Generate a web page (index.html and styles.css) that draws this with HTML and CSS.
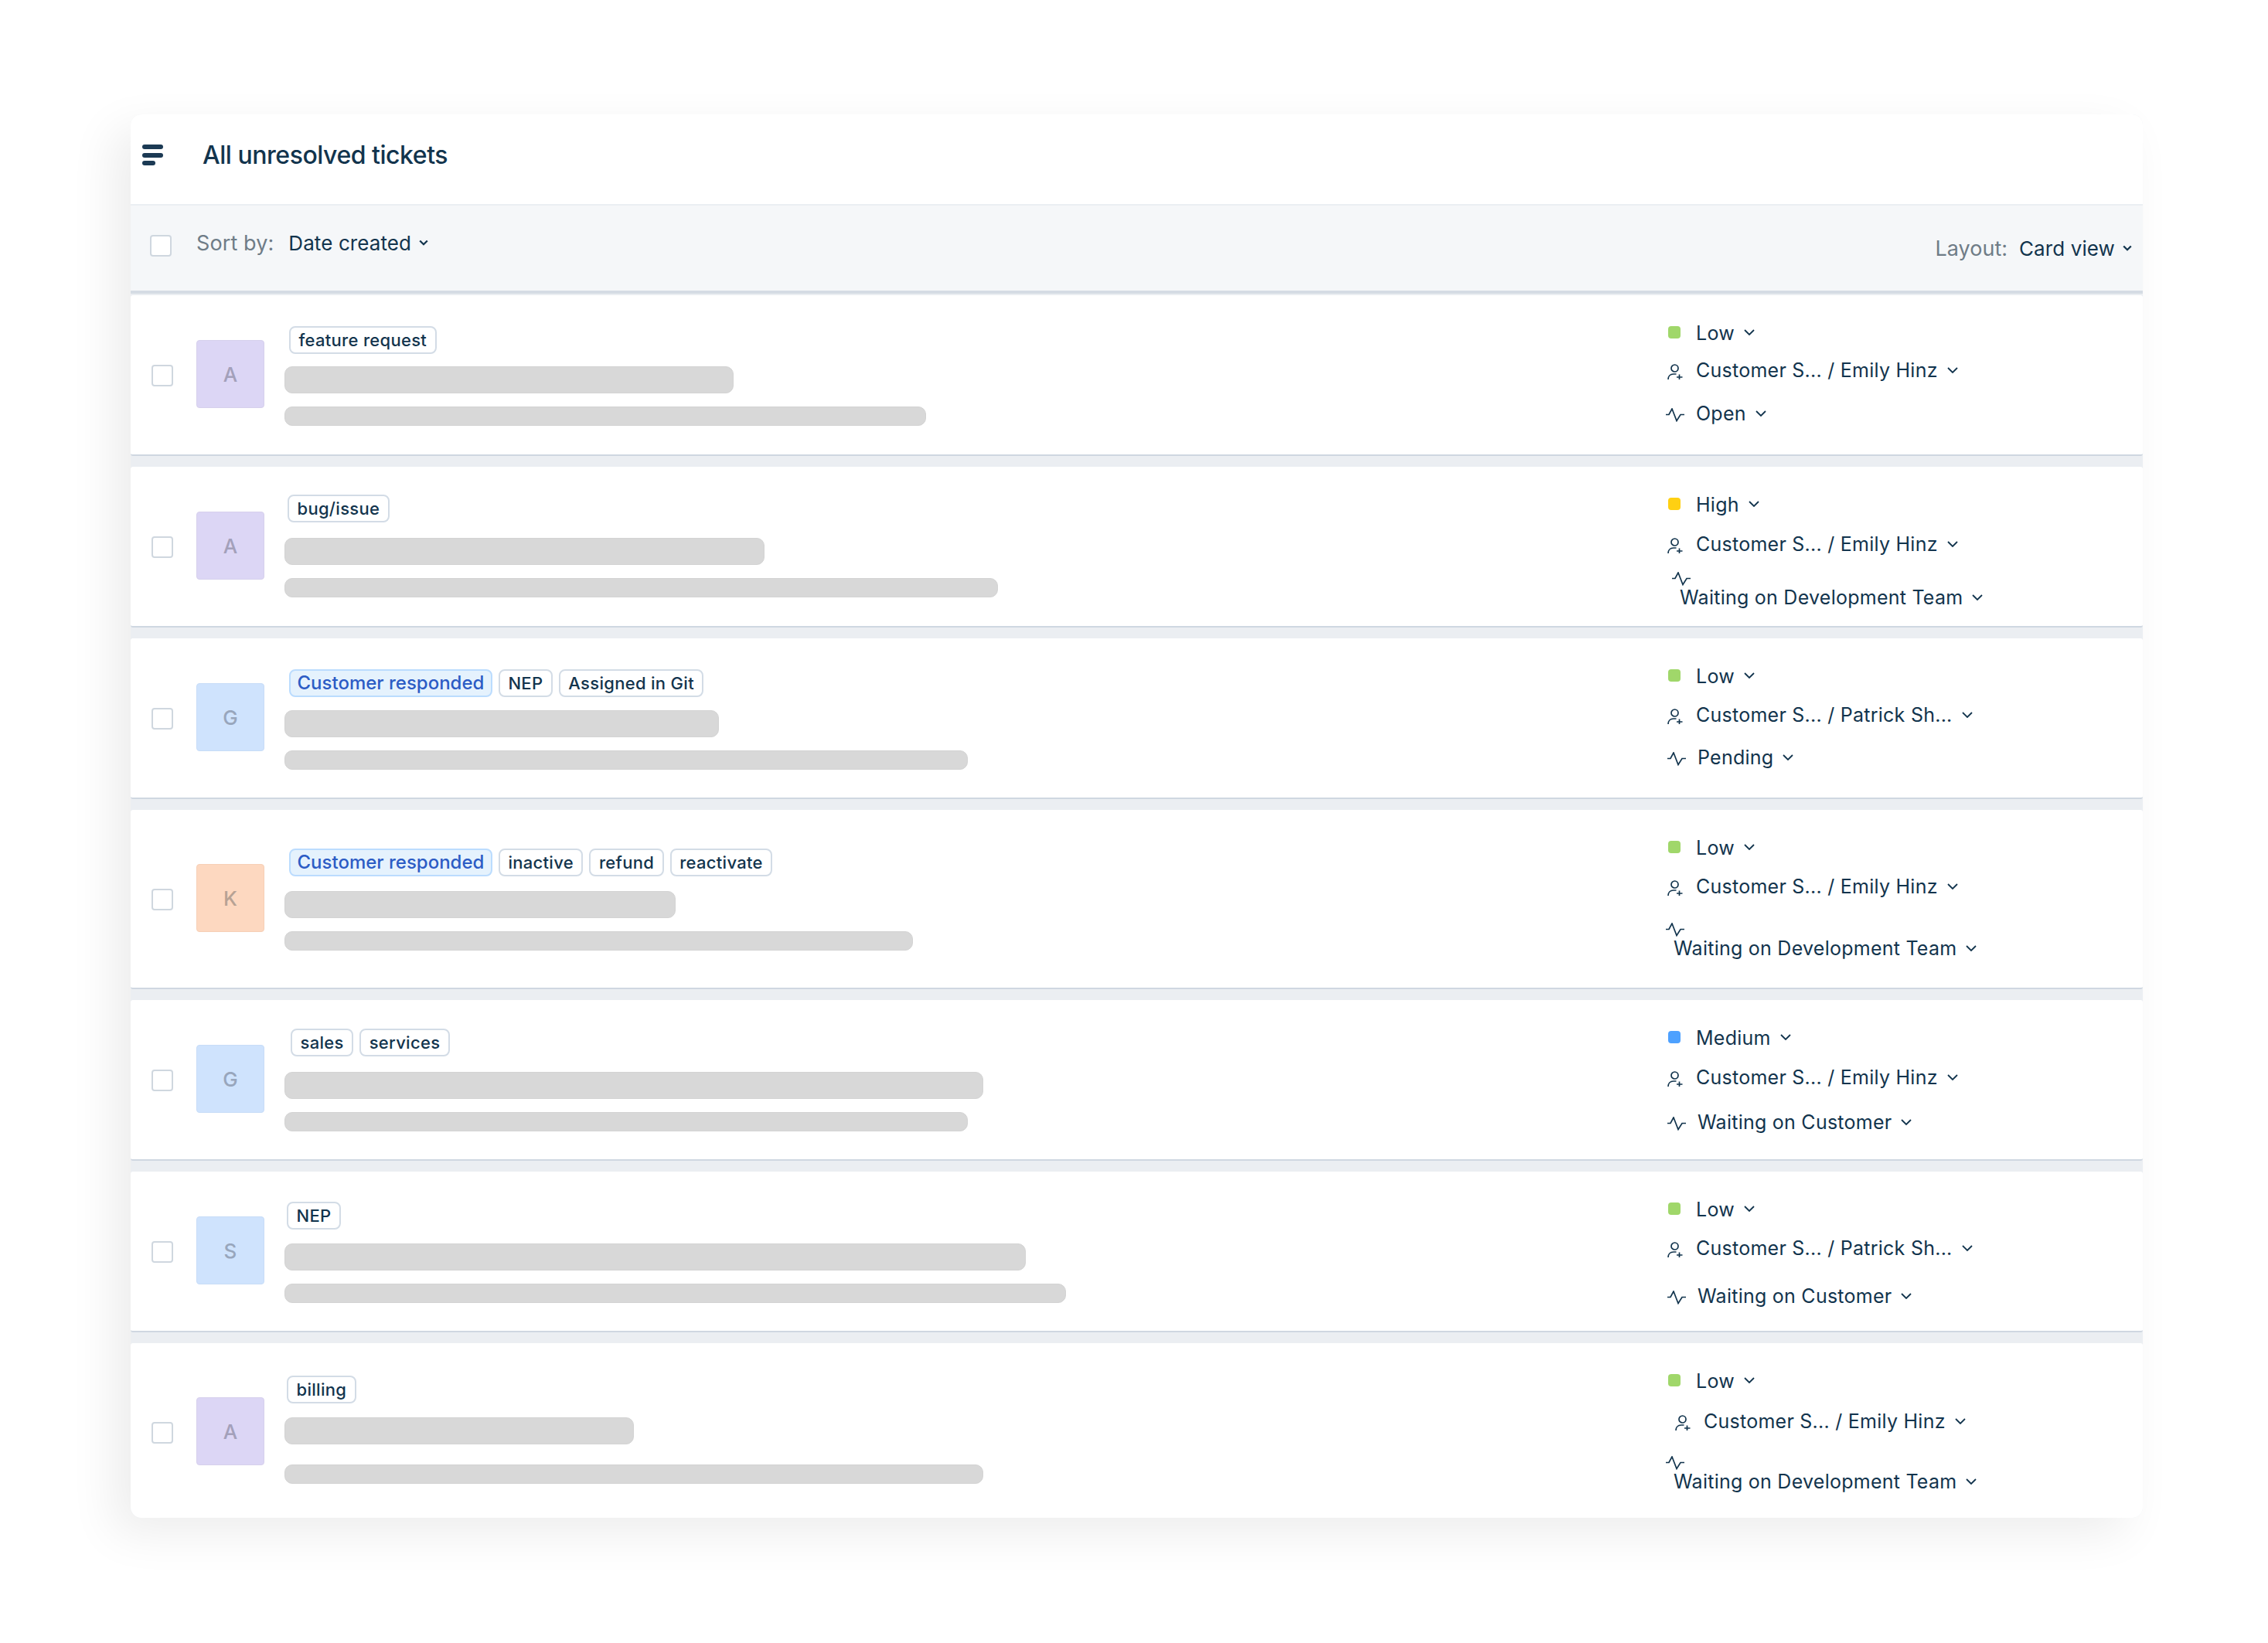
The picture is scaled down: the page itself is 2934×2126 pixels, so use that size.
FILE: index.html
```html
<!DOCTYPE html>
<html lang="en">
<head>
<meta charset="utf-8">
<title>All unresolved tickets</title>
<link rel="stylesheet" href="styles.css">
</head>
<body>
<svg class="defs" aria-hidden="true">
  <symbol id="i-chev" viewBox="0 0 14 8"><path d="M1 1l6 6 6-6" fill="none" stroke="#12344d" stroke-width="1.8"/></symbol>
  <symbol id="i-chev-b" viewBox="0 0 12 8"><path d="M1.2 1.5L6 6.2l4.8-4.7" fill="none" stroke="#12344d" stroke-width="2.3"/></symbol>
  <symbol id="i-person" viewBox="0 0 20 20"><g fill="none" stroke="#12344d" stroke-width="1.7"><circle cx="9.5" cy="5.5" r="4.5"/><path d="M1 20c0-4 2.5-7 7-7h3.5M15.5 13.500v6.500M12 17h7.500"/></g></symbol>
  <symbol id="i-activity" viewBox="0 0 24 18"><path d="M0 8.500h4L8 1l6 15.500L19 8.500h5" fill="none" stroke="#12344d" stroke-width="1.7"/></symbol>
</svg>
<main class="panel">
  <header class="head">
    <span class="menu"><i class="bar"></i><i class="bar"></i><i class="bar short"></i></span>
    <h1 class="title">All unresolved tickets</h1>
  </header>
  <div class="toolbar">
    <div class="sort">
      <input class="check" type="checkbox" aria-label="Select all">
      <span class="tool-label">Sort by:</span>
      <span class="tool-value">Date created</span>
      <svg class="chev-b"><use href="#i-chev-b"/></svg>
    </div>
    <div class="layout">
      <span class="tool-label">Layout:</span>
      <span class="tool-value">Card view</span>
      <svg class="chev-b"><use href="#i-chev-b"/></svg>
    </div>
  </div>

  <article class="row r1">
    <div class="lead"><input class="check" type="checkbox" aria-label="Select"><div class="avatar purple">A</div></div>
    <div class="main">
      <div class="tags"><span class="tag">feature request</span></div>
      <div class="sk sk1" style="width:581px"></div>
      <div class="sk sk2" style="width:830px"></div>
    </div>
    <div class="meta">
      <div class="line"><span class="ic"><i class="dot low"></i></span><span class="pri">Low</span><svg class="chev"><use href="#i-chev"/></svg></div>
      <div class="line who"><span class="ic"><svg class="person"><use href="#i-person"/></svg></span><span>Customer S... / Emily Hinz</span><svg class="chev"><use href="#i-chev"/></svg></div>
      <div class="line st"><span class="ic"><svg class="activity"><use href="#i-activity"/></svg></span><span>Open</span><svg class="chev"><use href="#i-chev"/></svg></div>
    </div>
  </article>

  <article class="row r2">
    <div class="lead"><input class="check" type="checkbox" aria-label="Select"><div class="avatar purple">A</div></div>
    <div class="main">
      <div class="tags"><span class="tag">bug/issue</span></div>
      <div class="sk sk1" style="width:621px"></div>
      <div class="sk sk2" style="width:923px"></div>
    </div>
    <div class="meta">
      <div class="line"><span class="ic"><i class="dot high"></i></span><span class="pri">High</span><svg class="chev"><use href="#i-chev"/></svg></div>
      <div class="line who"><span class="ic"><svg class="person"><use href="#i-person"/></svg></span><span>Customer S... / Emily Hinz</span><svg class="chev"><use href="#i-chev"/></svg></div>
      <div class="stack st"><svg class="activity"><use href="#i-activity"/></svg><div class="line"><span>Waiting on Development Team</span><svg class="chev"><use href="#i-chev"/></svg></div></div>
    </div>
  </article>

  <article class="row r3">
    <div class="lead"><input class="check" type="checkbox" aria-label="Select"><div class="avatar blue">G</div></div>
    <div class="main">
      <div class="tags"><span class="tag info">Customer responded</span><span class="tag">NEP</span><span class="tag">Assigned in Git</span></div>
      <div class="sk sk1" style="width:562px"></div>
      <div class="sk sk2" style="width:884px"></div>
    </div>
    <div class="meta">
      <div class="line"><span class="ic"><i class="dot low"></i></span><span class="pri">Low</span><svg class="chev"><use href="#i-chev"/></svg></div>
      <div class="line who"><span class="ic"><svg class="person"><use href="#i-person"/></svg></span><span>Customer S... / Patrick Sh...</span><svg class="chev"><use href="#i-chev"/></svg></div>
      <div class="line st"><span class="ic"><svg class="activity"><use href="#i-activity"/></svg></span><span>Pending</span><svg class="chev"><use href="#i-chev"/></svg></div>
    </div>
  </article>

  <article class="row r4">
    <div class="lead"><input class="check" type="checkbox" aria-label="Select"><div class="avatar orange">K</div></div>
    <div class="main">
      <div class="tags"><span class="tag info">Customer responded</span><span class="tag">inactive</span><span class="tag">refund</span><span class="tag">reactivate</span></div>
      <div class="sk sk1" style="width:506px"></div>
      <div class="sk sk2" style="width:813px"></div>
    </div>
    <div class="meta">
      <div class="line"><span class="ic"><i class="dot low"></i></span><span class="pri">Low</span><svg class="chev"><use href="#i-chev"/></svg></div>
      <div class="line who"><span class="ic"><svg class="person"><use href="#i-person"/></svg></span><span>Customer S... / Emily Hinz</span><svg class="chev"><use href="#i-chev"/></svg></div>
      <div class="stack st"><svg class="activity"><use href="#i-activity"/></svg><div class="line"><span>Waiting on Development Team</span><svg class="chev"><use href="#i-chev"/></svg></div></div>
    </div>
  </article>

  <article class="row r5">
    <div class="lead"><input class="check" type="checkbox" aria-label="Select"><div class="avatar blue">G</div></div>
    <div class="main">
      <div class="tags"><span class="tag">sales</span><span class="tag">services</span></div>
      <div class="sk sk1" style="width:904px"></div>
      <div class="sk sk2" style="width:884px"></div>
    </div>
    <div class="meta">
      <div class="line"><span class="ic"><i class="dot medium"></i></span><span class="pri">Medium</span><svg class="chev"><use href="#i-chev"/></svg></div>
      <div class="line who"><span class="ic"><svg class="person"><use href="#i-person"/></svg></span><span>Customer S... / Emily Hinz</span><svg class="chev"><use href="#i-chev"/></svg></div>
      <div class="line st"><span class="ic"><svg class="activity"><use href="#i-activity"/></svg></span><span>Waiting on Customer</span><svg class="chev"><use href="#i-chev"/></svg></div>
    </div>
  </article>

  <article class="row r6">
    <div class="lead"><input class="check" type="checkbox" aria-label="Select"><div class="avatar blue">S</div></div>
    <div class="main">
      <div class="tags"><span class="tag">NEP</span></div>
      <div class="sk sk1" style="width:959px"></div>
      <div class="sk sk2" style="width:1011px"></div>
    </div>
    <div class="meta">
      <div class="line"><span class="ic"><i class="dot low"></i></span><span class="pri">Low</span><svg class="chev"><use href="#i-chev"/></svg></div>
      <div class="line who"><span class="ic"><svg class="person"><use href="#i-person"/></svg></span><span>Customer S... / Patrick Sh...</span><svg class="chev"><use href="#i-chev"/></svg></div>
      <div class="line st"><span class="ic"><svg class="activity"><use href="#i-activity"/></svg></span><span>Waiting on Customer</span><svg class="chev"><use href="#i-chev"/></svg></div>
    </div>
  </article>

  <article class="row r7">
    <div class="lead"><input class="check" type="checkbox" aria-label="Select"><div class="avatar purple">A</div></div>
    <div class="main">
      <div class="tags"><span class="tag">billing</span></div>
      <div class="sk sk1" style="width:452px"></div>
      <div class="sk sk2" style="width:904px"></div>
    </div>
    <div class="meta">
      <div class="line"><span class="ic"><i class="dot low"></i></span><span class="pri">Low</span><svg class="chev"><use href="#i-chev"/></svg></div>
      <div class="line who"><span class="ic"><svg class="person"><use href="#i-person"/></svg></span><span>Customer S... / Emily Hinz</span><svg class="chev"><use href="#i-chev"/></svg></div>
      <div class="stack st"><svg class="activity"><use href="#i-activity"/></svg><div class="line"><span>Waiting on Development Team</span><svg class="chev"><use href="#i-chev"/></svg></div></div>
    </div>
  </article>
</main>
</body>
</html>
```

FILE: styles.css
```css
* { box-sizing: border-box; }
html, body { margin: 0; background: #fff; }
body {
  padding: 148px 162px 162px 169px;
  font-family: Inter, "Noto Sans", sans-serif;
  color: #12344d;
}
.defs { display: none; }
.panel {
  width: 2603px;
  background: #ebeef2;
  border-radius: 14px;
  box-shadow: -22px 20px 60px rgba(0, 0, 0, .075);
  overflow: hidden;
}

/* header */
.head {
  height: 118px;
  background: #fff;
  display: flex;
  padding: 39px 0 0 15px;
  border-bottom: 2px solid #ebeff3;
}
.menu { display: flex; flex-direction: column; gap: 4.5px; width: 27px; flex: none; }
.bar { display: block; height: 6px; width: 27px; border-radius: 3px; background: #1c3a54; }
.bar.short { width: 17px; }
.title { margin: -8px 0 0 51px; font-size: 32px; line-height: 44px; font-weight: 500; letter-spacing: -.47px; color: #12344d; }

/* toolbar */
.toolbar {
  height: 114px;
  padding: 0 14px 0 25px;
  margin-bottom: 2px;
  background: #f5f7f9;
  border-bottom: 4px solid #d5dce4;
  display: flex;
  justify-content: space-between;
}
.sort { display: flex; align-items: center; height: 96px; }
.sort .check { margin-top: 8px; margin-right: 32px; }
.sort .tool-label { margin-right: 19px; letter-spacing: .1px; }
.layout { display: flex; align-items: center; height: 110px; }
.layout .tool-label { margin-right: 15px; }
.tool-label { font-size: 27px; color: #6f7c87; }
.tool-value { font-size: 26px; letter-spacing: .1px; }
.chev-b { width: 12px; height: 8px; margin-left: 10px; }

/* rows */
.row {
  background: #fff;
  border-bottom: 2px solid #cfd7e1;
  border-radius: 3px;
  height: 208px;
  margin-bottom: 14px;
  display: flex;
  align-items: flex-start;
  padding-left: 27px;
}
.r4 { height: 232px; }
.r7 { height: 226px; margin-bottom: 0; border-bottom: 0; }

.lead { display: flex; align-items: center; flex: none; margin-top: 58px; }
.lead .check { margin-top: 4px; }
.r4 .lead, .r7 .lead { margin-top: 70px; }
.check {
  appearance: none;
  width: 28px;
  height: 28px;
  margin: 0;
  flex: none;
  background: #fff;
  border: 2px solid #cfd7df;
  border-radius: 4px;
}
.avatar {
  width: 88px;
  height: 88px;
  margin: 0 26px 0 30px;
  flex: none;
  border-radius: 4px;
  display: flex;
  align-items: center;
  justify-content: center;
  font-size: 26px;
  font-weight: 500;
}
.purple { background: #dcd6f5; border: 1px solid #d6d0ec; color: #a3a0ba; }
.blue { background: #cfe3fd; border: 1px solid #c7dcf7; color: #98a6bc; }
.orange { background: #fdd8c0; border: 1px solid #f6cfb6; color: #b7a294; }

.main { flex: 1; min-width: 0; }
.tags { display: flex; gap: 8px; height: 36px; margin-left: 6px; }
.tag {
  height: 36px;
  padding: 0 10.5px;
  border: 2px solid #d3dce6;
  border-radius: 8px;
  background: #fff;
  font-size: 22px;
  line-height: 32px;
  font-weight: 500;
  letter-spacing: .3px;
  white-space: nowrap;
}
.tag.info {
  background: #e5f2fd;
  border-color: #bbdcfe;
  color: #2c5cc5;
  font-size: 24px;
  letter-spacing: 0;
  padding: 0 8.5px;
}
.sk { background: #d8d8d8; border: 1px solid #d3d3d3; border-radius: 10px; }
.sk1 { height: 35px; margin-top: 16px; }
.sk2 { height: 25px; margin-top: 17px; }

.r1 .tags { margin-top: 40px; }
.r2 .tags { margin-top: 36px; margin-left: 4px; }
.r2 .sk1 { margin-top: 20px; }
.r3 .tags { margin-top: 40px; }
.r3 .sk1 { margin-top: 17px; }
.r4 .tags { margin-top: 50px; }
.r4 .sk1 { margin-top: 19px; }
.r5 .tags { margin-top: 37px; margin-left: 8px; }
.r5 .sk1 { margin-top: 20px; }
.r6 .tags { margin-top: 39px; margin-left: 3px; }
.r6 .sk1 { margin-top: 18px; }
.r7 .tags { margin-top: 42px; margin-left: 3px; }
.r7 .sk1 { margin-top: 18px; }
.r7 .sk2 { margin-top: 26px; }

/* right column */
.meta { width: 617px; flex: none; padding-top: 33px; font-size: 25px; letter-spacing: .25px; }
.line { display: flex; align-items: center; height: 30px; white-space: nowrap; }
.ic { width: 39px; flex: none; display: flex; align-items: center; }
.pri { margin-top: 2px; }
.dot { display: block; width: 16px; height: 16px; margin-left: 3px; border-radius: 4px; }
.low { background: #a0d76a; }
.high { background: #ffd012; }
.medium { background: #4da1ff; }
.person { width: 20px; height: 20px; margin: 4px 0 0 2px; display: block; }
.activity { width: 24px; height: 18px; margin-top: 4px; display: block; flex: none; }
.chev { width: 14px; height: 8px; margin-left: 12px; flex: none; }

.stack { display: flex; flex-direction: column; align-items: flex-start; }
.stack .activity { margin-top: 0; }
.stack .line { padding-left: 10px; }

.r1 .who { margin-top: 19px; }
.r1 .st { margin-top: 26px; }
.r2 .who { margin-top: 22px; }
.r2 .st { margin-top: 21px; padding-left: 8px; }
.r3 .who { margin-top: 21px; }
.r3 .st { margin-top: 25px; padding-left: 2px; }
.r4 .who { margin-top: 21px; }
.r4 .st { margin-top: 32px; }
.r5 .who { margin-top: 22px; }
.r5 .st { margin-top: 28px; padding-left: 2px; }
.r6 .who { margin-top: 21px; }
.r6 .st { margin-top: 32px; padding-left: 2px; }
.r7 .who { margin-top: 23px; padding-left: 10px; }
.r7 .st { margin-top: 30px; }
```
